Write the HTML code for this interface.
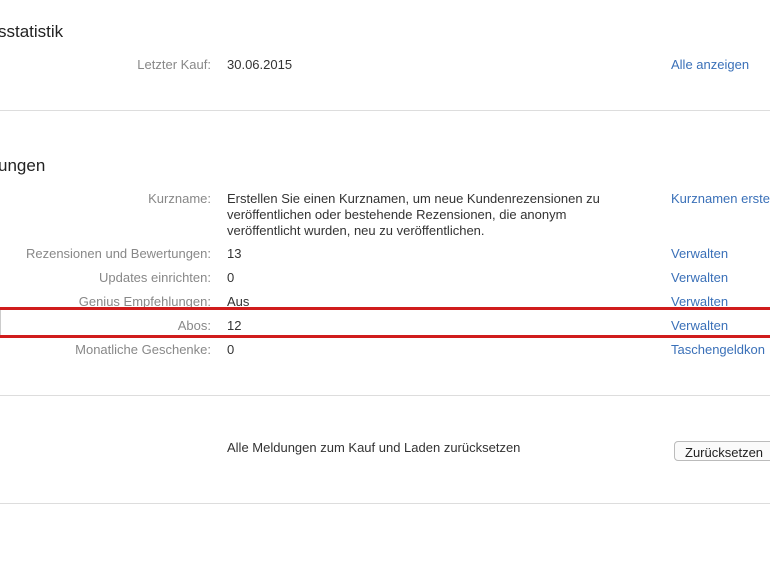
<!DOCTYPE html>
<html><head><meta charset="utf-8"><style>
body{margin:0;width:770px;height:578px;background:#fff;overflow:hidden;position:relative;font-family:"Liberation Sans",sans-serif;font-size:13px;color:#333}
.a{position:absolute;white-space:nowrap}
.h{font-size:17px;color:#222}
.l{right:559px;text-align:right;color:#888}
.v{left:227px;color:#333}
.k{left:671px;color:#3a70b8}
.sep{position:absolute;left:0;width:770px;height:1px;background:#ddd}
</style></head><body>
<div class="a h" style="left:-2px;top:22px">sstatistik</div>
<div class="a l" style="top:57px">Letzter Kauf:</div>
<div class="a v" style="top:57px">30.06.2015</div>
<div class="a k" style="top:57px">Alle anzeigen</div>
<div class="sep" style="top:110px"></div>
<div class="a h" style="left:-2px;top:156px">ungen</div>
<div class="a l" style="top:191px">Kurzname:</div>
<div class="a v" style="top:191px;line-height:16px">Erstellen Sie einen Kurznamen, um neue Kundenrezensionen zu<br>veröffentlichen oder bestehende Rezensionen, die anonym<br>veröffentlicht wurden, neu zu veröffentlichen.</div>
<div class="a k" style="top:191px">Kurznamen erste</div>
<div class="a l" style="top:246px">Rezensionen und Bewertungen:</div><div class="a v" style="top:246px">13</div><div class="a k" style="top:246px">Verwalten</div>
<div class="a l" style="top:270px">Updates einrichten:</div><div class="a v" style="top:270px">0</div><div class="a k" style="top:270px">Verwalten</div>
<div class="a l" style="top:294px">Genius Empfehlungen:</div><div class="a v" style="top:294px">Aus</div><div class="a k" style="top:294px">Verwalten</div>
<div class="a l" style="top:318px">Abos:</div><div class="a v" style="top:318px">12</div><div class="a k" style="top:318px">Verwalten</div>
<div class="a l" style="top:342px">Monatliche Geschenke:</div><div class="a v" style="top:342px">0</div><div class="a k" style="top:342px">Taschengeldkon</div>
<div style="position:absolute;left:0;top:310px;width:1px;height:25px;background:#ccc"></div>
<div style="position:absolute;left:-3px;top:307px;width:790px;height:25px;border:3px solid #d01c1c"></div>
<div class="sep" style="top:395px"></div>
<div class="a v" style="top:440px">Alle Meldungen zum Kauf und Laden zurücksetzen</div>
<div class="a" style="left:674px;top:441px;width:110px;height:20px;border:1px solid #bbb;border-radius:4px;background:#fafafa;box-sizing:border-box;padding:3px 0 0 10px;color:#222">Zurücksetzen</div>
<div class="sep" style="top:503px"></div>
</body></html>
